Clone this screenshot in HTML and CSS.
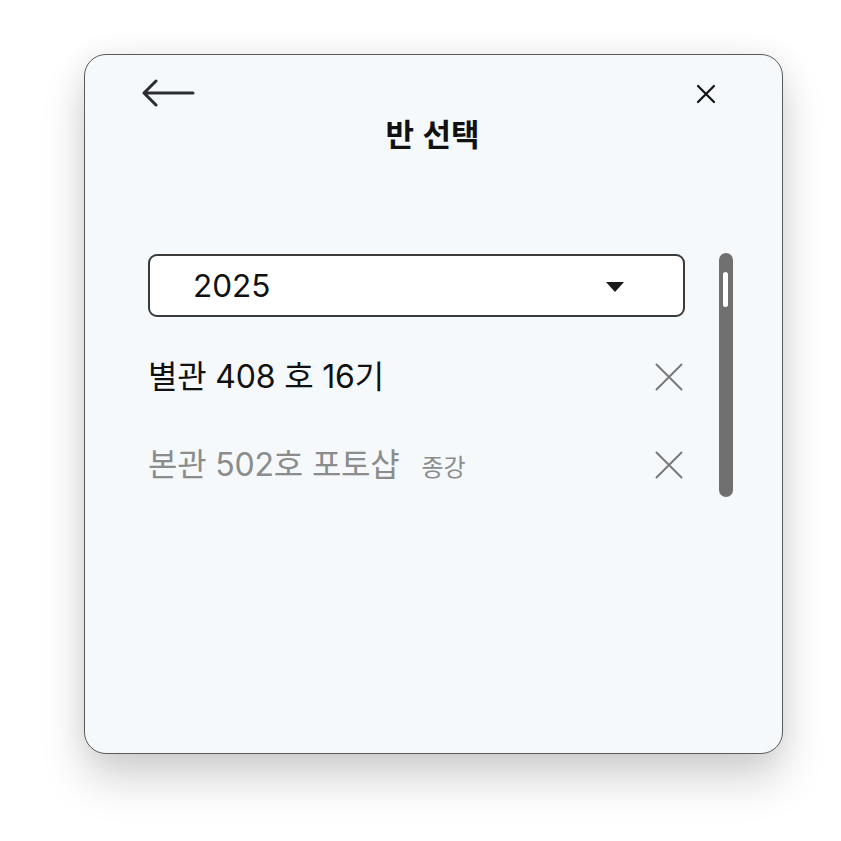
FILE: index.html
```html
<!DOCTYPE html>
<html lang="ko">
<head>
<meta charset="utf-8">
<title>반 선택</title>
<link rel="stylesheet" href="styles.css">
</head>
<body>
  <div class="stage">
    <section class="dialog">
      <header class="dialog-head">
        <div class="nav">
          <button class="icon-btn back" aria-label="뒤로">
            <svg width="54" height="28" viewBox="0 0 54 28" fill="none" stroke="#2b2d31" stroke-width="3" stroke-linecap="round" stroke-linejoin="round">
              <path d="M52 14H3M15 2L3 14l12 12"/>
            </svg>
          </button>
          <button class="icon-btn close" aria-label="닫기">
            <svg width="20" height="20" viewBox="0 0 20 20" fill="none" stroke="#111" stroke-width="2.2" stroke-linecap="round">
              <path d="M2 2l16 16M18 2L2 18"/>
            </svg>
          </button>
        </div>
        <h1 class="title">반 선택</h1>
      </header>

      <div class="dialog-body">
        <div class="main-col">
          <div class="select">
            <span class="select-value">2025</span>
            <span class="caret"></span>
          </div>
          <ul class="class-list">
            <li class="class-row">
              <span class="class-name">별관 408 호 16기</span>
              <button class="row-remove" aria-label="삭제">
                <svg width="28" height="28" viewBox="0 0 28 28" fill="none" stroke="#7a7a7a" stroke-width="2" stroke-linecap="round">
                  <path d="M1.5 1.5l25 25M26.5 1.5l-25 25"/>
                </svg>
              </button>
            </li>
            <li class="class-row is-ended">
              <span class="class-name">본관 502호 포토샵<small class="tag">종강</small></span>
              <button class="row-remove" aria-label="삭제">
                <svg width="28" height="28" viewBox="0 0 28 28" fill="none" stroke="#7a7a7a" stroke-width="2" stroke-linecap="round">
                  <path d="M1.5 1.5l25 25M26.5 1.5l-25 25"/>
                </svg>
              </button>
            </li>
          </ul>
        </div>
        <div class="scrollbar"><span class="thumb"></span></div>
      </div>
    </section>
  </div>
</body>
</html>
```

FILE: styles.css
```css
* { box-sizing: border-box; }

html, body {
  margin: 0;
  padding: 0;
  background: #ffffff;
}

body {
  font-family: Inter, "Noto Sans CJK KR", sans-serif;
  color: #111;
}

.stage {
  min-height: 841px;
  padding: 54px 0 0 84px;
}

.dialog {
  width: 699px;
  height: 700px;
  background: #f5f9fc;
  border: 1.5px solid #5a5a5a;
  border-radius: 22px;
  box-shadow: 0 26px 44px rgba(0, 0, 0, 0.17), 0 0 30px rgba(0, 0, 0, 0.07);
}

.dialog-head {
  padding: 24px 66px 0 56px;
}

.nav {
  display: flex;
  justify-content: space-between;
  align-items: center;
  height: 28px;
}

.icon-btn {
  border: 0;
  background: none;
  padding: 0;
  display: flex;
  cursor: pointer;
}

.close { margin-top: 2px; }

.title {
  margin: 8px 0 0 8px;
  text-align: center;
  font-family: "Noto Sans CJK KR", sans-serif;
  font-size: 31px;
  font-weight: 700;
  line-height: 36px;
  color: #111;
}

.dialog-body {
  display: grid;
  grid-template-columns: 537px 14px;
  column-gap: 34px;
  padding: 103px 0 0 63px;
}

.select {
  height: 63px;
  background: #ffffff;
  border: 2px solid #3a3a3a;
  border-radius: 9px;
  display: flex;
  align-items: center;
  justify-content: space-between;
  padding: 0 59px 0 43px;
}

.select-value {
  font-size: 31.5px;
  line-height: 1;
  color: #111;
  margin-top: 1px;
}

.caret {
  width: 0;
  height: 0;
  border-left: 9px solid transparent;
  border-right: 9px solid transparent;
  border-top: 10px solid #1a1a1a;
  margin-top: 2px;
}

.class-list {
  list-style: none;
  margin: 16px 0 0;
  padding: 0;
}

.class-row {
  height: 88px;
  display: flex;
  align-items: center;
  justify-content: space-between;
  padding-right: 2px;
}

.class-name {
  font-size: 32px;
  line-height: 1;
  color: #111;
  letter-spacing: -0.2px;
}

.is-ended .class-name { color: #8c8c8c; }

.tag {
  font-size: 24px;
  margin-left: 22px;
  color: #8c8c8c;
}

.row-remove {
  border: 0;
  background: none;
  padding: 0;
  display: flex;
}

.scrollbar {
  margin-top: -1px;
  height: 244px;
  background: #707070;
  border-radius: 7px;
  padding: 19px 0 0 4px;
}

.thumb {
  display: block;
  width: 5px;
  height: 35px;
  background: #ffffff;
  border-radius: 3px;
}
```
